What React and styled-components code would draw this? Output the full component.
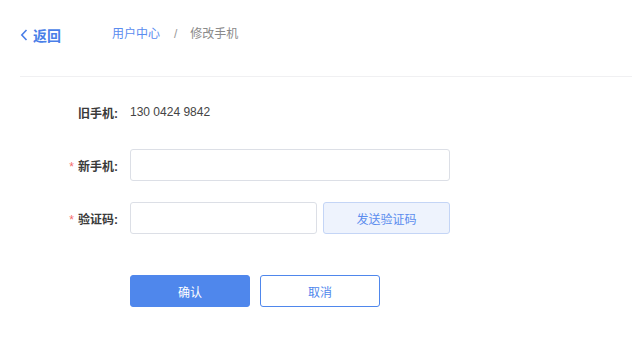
import React from 'react';
import styled, { createGlobalStyle } from 'styled-components';

const GlobalStyle = createGlobalStyle`
  body {
    margin: 0;
    background: #fff;
    font-family: "Liberation Sans", "Noto Sans CJK SC", sans-serif;
  }
`;

const Page = styled.div`
  width: 632px;
  height: 345px;
  overflow: hidden;
`;

const TopBar = styled.div`
  display: flex;
  align-items: flex-start;
  height: 77px;
  margin-left: 20px;
  border-bottom: 1px solid #f0f0f2;
  box-sizing: border-box;
`;

const BackLink = styled.a`
  display: flex;
  align-items: center;
  gap: 5px;
  margin-top: 25px;
  color: #4a7fe8;
  font-size: 14px;
  font-weight: bold;
  cursor: pointer;
  svg {
    width: 8px;
    height: 12px;
  }
`;

const Crumbs = styled.div`
  display: flex;
  align-items: center;
  margin-left: 51px;
  margin-top: 26px;
  font-size: 12px;
  line-height: 16px;
`;

const Crumb = styled.span`
  color: ${p => (p.$active ? '#5a8cef' : '#8a8a8a')};
`;

const Sep = styled.span`
  color: #999;
  margin: 0 13px 0 14px;
`;

const Form = styled.div`
  display: flex;
  flex-direction: column;
  padding-top: 19px;
`;

const Row = styled.div`
  display: flex;
  align-items: center;
  height: 32px;
  margin-bottom: ${p => p.$gap}px;
`;

const Label = styled.label`
  width: 130px;
  box-sizing: border-box;
  padding-right: 12px;
  text-align: right;
  font-size: 12px;
  font-weight: bold;
  color: #3a3a3a;
  white-space: nowrap;
`;

const Star = styled.span`
  color: #f56c6c;
  font-weight: normal;
  margin-right: 4px;
`;

const Value = styled.span`
  font-size: 12px;
  color: #444;
`;

const Input = styled.input`
  width: ${p => p.$w}px;
  height: 32px;
  box-sizing: border-box;
  border: 1px solid #dcdfe6;
  border-radius: 3px;
  outline: none;
  padding: 0 10px;
  font-size: 12px;
`;

const CodeButton = styled.button`
  margin-left: 6px;
  width: 127px;
  height: 32px;
  box-sizing: border-box;
  border: 1px solid #c4d5f6;
  border-radius: 3px;
  background: #eef3fd;
  color: #5b8cee;
  font-size: 12px;
  font-family: inherit;
  cursor: pointer;
`;

const Actions = styled.div`
  display: flex;
  gap: 10px;
  padding-left: 130px;
`;

const Button = styled.button`
  width: 120px;
  height: 32px;
  box-sizing: border-box;
  border-radius: 3px;
  font-size: 12px;
  font-family: inherit;
  cursor: pointer;
  border: 1px solid #4f87ec;
  background: ${p => (p.$primary ? '#4f87ec' : '#fff')};
  color: ${p => (p.$primary ? '#fff' : '#4f87ec')};
`;

const App = () => {
  return (
    <Page>
      <GlobalStyle />
      <TopBar>
        <BackLink>
          <svg viewBox="0 0 8 12">
            <path d="M6.5 1 L1.8 6 L6.5 11" fill="none" stroke="currentColor" strokeWidth="1.6" />
          </svg>
          返回
        </BackLink>
        <Crumbs>
          <Crumb $active>用户中心</Crumb>
          <Sep>/</Sep>
          <Crumb>修改手机</Crumb>
        </Crumbs>
      </TopBar>
      <Form>
        <Row $gap={21}>
          <Label>旧手机:</Label>
          <Value>130 0424 9842</Value>
        </Row>
        <Row $gap={21}>
          <Label><Star>*</Star>新手机:</Label>
          <Input $w={320} />
        </Row>
        <Row $gap={41}>
          <Label><Star>*</Star>验证码:</Label>
          <Input $w={187} />
          <CodeButton>发送验证码</CodeButton>
        </Row>
        <Actions>
          <Button $primary>确认</Button>
          <Button>取消</Button>
        </Actions>
      </Form>
    </Page>
  );
};

export default App;
